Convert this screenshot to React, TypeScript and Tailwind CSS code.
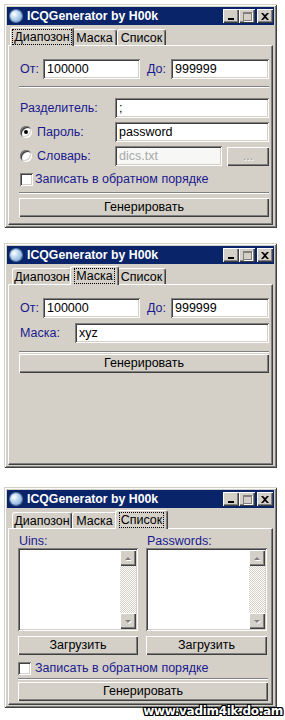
import type { ReactNode } from "react";

const sunken =
  "shadow-[inset_1px_1px_#808080,inset_-1px_-1px_#ffffff,inset_2px_2px_#404040,inset_-2px_-2px_#d4d0c8]";
const raised =
  "shadow-[inset_1px_1px_#ffffff,inset_-1px_-1px_#404040,inset_-2px_-2px_#808080]";

const TABS = ["Диапозон", "Маска", "Список"];

function Globe() {
  /** round app icon in the caption. */
  return (
    <div className="h-[12px] w-[12px] rounded-full bg-[radial-gradient(circle_at_35%_35%,#ffffff_0%,#bcd6f0_40%,#6f9cc9_100%)] shadow-[0_0_0_1px_#5a7ea8]" />
  );
}

function CaptionButton({ kind }: { kind: "min" | "max" | "close" }) {
  return (
    <div className={`flex h-[14px] w-[16px] items-center justify-center bg-[#d4d0c8] ${raised}`}>
      {kind === "min" && <div className="mt-[5px] -ml-[1px] h-[2px] w-[6px] bg-black" />}
      {kind === "max" && (
        <div className="h-[9px] w-[9px] border border-t-2 border-[#808080] shadow-[1px_1px_#ffffff]" />
      )}
      {kind === "close" && (
        <svg width="8" height="7" viewBox="0 0 8 7">
          <path d="M0 0h2l2 2 2-2h2L5 3.5 8 7H6L4 5 2 7H0l3-3.5z" fill="#000" />
        </svg>
      )}
    </div>
  );
}

function TitleBar() {
  return (
    <div className="flex h-[18px] items-center bg-[#0a246a] pl-[3px] pr-[1px]">
      <Globe />
      <span className="ml-[5px] text-[12.3px] leading-none font-bold text-white">
        ICQGenerator by H00k
      </span>
      <div className="ml-auto flex items-center">
        <CaptionButton kind="min" />
        <CaptionButton kind="max" />
        <div className="ml-[2px]">
          <CaptionButton kind="close" />
        </div>
      </div>
    </div>
  );
}

function Tab({ label, active, width }: { label: string; active: boolean; width: number }) {
  if (active) {
    return (
      <div
        className="relative z-10 -mx-[2px] -mb-px flex h-[19px] items-start justify-center rounded-t-[3px] border-t border-r border-l border-white border-r-[#404040] bg-[#d4d0c8] pt-[1px] shadow-[inset_-1px_0_#808080]"
        style={{ width: width + 4 }}
      >
        <span className="border border-dotted border-black px-[1px] text-[12.5px] leading-[14px] text-black">
          {label}
        </span>
      </div>
    );
  }
  return (
    <div
      className="flex h-[16px] items-start justify-center rounded-t-[3px] border-t border-r border-l border-white border-r-[#404040] bg-[#d4d0c8] pt-[1px] shadow-[inset_-1px_0_#808080]"
      style={{ width }}
    >
      <span className="text-[12.5px] leading-[14px] text-black">{label}</span>
    </div>
  );
}

function Window({ active, panelHeight, children }: { active: number; panelHeight: number; children: ReactNode }) {
  /** classic win2000 window with tab control. */
  const widths = [60, 45, 49];
  return (
    <div className="w-[273px] bg-[#d4d0c8] p-[3px] shadow-[inset_1px_1px_#d4d0c8,inset_-1px_-1px_#404040,inset_2px_2px_#ffffff,inset_-2px_-2px_#808080]">
      <TitleBar />
      <div className="px-[1px] pt-[2px]">
        <div className="flex h-[18px] items-end pl-[4px]">
          {TABS.map((t, i) => (
            <Tab key={t} label={t} active={i === active} width={widths[i]} />
          ))}
        </div>
        <div
          className="border border-white border-r-[#404040] border-b-[#404040] shadow-[inset_-1px_-1px_#808080]"
          style={{ height: panelHeight }}
        >
          {children}
        </div>
      </div>
    </div>
  );
}

function Label({ children, className = "" }: { children: ReactNode; className?: string }) {
  return <span className={`text-[12.5px] leading-none text-[#1a1a8e] ${className}`}>{children}</span>;
}

function Input({ value, width, disabled }: { value: string; width: number; disabled?: boolean }) {
  return (
    <div
      className={`flex h-[20px] shrink-0 items-center pl-[4px] text-[12.5px] ${sunken} ${
        disabled ? "bg-[#f7f7f5] text-[#a8a8a8]" : "bg-white text-black"
      }`}
      style={{ width }}
    >
      {value}
    </div>
  );
}

function Button({ children, width, disabled }: { children: ReactNode; width: number; disabled?: boolean }) {
  return (
    <div
      className={`flex h-[19px] shrink-0 items-center justify-center bg-[#d4d0c8] text-[12.5px] ${raised} ${
        disabled ? "text-[#a0a0a0] [text-shadow:1px_1px_#ffffff]" : "text-black"
      }`}
      style={{ width }}
    >
      {children}
    </div>
  );
}

function Separator({ width }: { width: number }) {
  return <div className="h-[2px] border-t border-b border-t-[#808080] border-b-white" style={{ width }} />;
}

function Radio({ checked }: { checked?: boolean }) {
  return (
    <div className={`flex h-[12px] w-[12px] shrink-0 items-center justify-center rounded-full bg-white ${sunken}`}>
      {checked && <div className="h-[4px] w-[4px] rounded-full bg-black" />}
    </div>
  );
}

function Checkbox() {
  return <div className={`h-[13px] w-[13px] shrink-0 bg-white ${sunken}`} />;
}

function RangeRow() {
  return (
    <div className="flex items-center">
      <Label className="ml-[1px] w-[23px]">От:</Label>
      <Input value="100000" width={97} />
      <Label className="ml-[7px] w-[24px]">До:</Label>
      <Input value="999999" width={98} />
    </div>
  );
}

function ScrollArrow({ up }: { up?: boolean }) {
  return (
    <div className={`flex h-[16px] w-[16px] items-center justify-center bg-[#d4d0c8] ${raised}`}>
      <svg width="8" height="5" viewBox="0 0 8 5" className="overflow-visible">
        <path d={up ? "M1 4h6L4 1z" : "M1 1h6L4 4z"} fill="#ffffff" transform="translate(1 1)" />
        <path d={up ? "M1 4h6L4 1z" : "M1 1h6L4 4z"} fill="#808080" />
      </svg>
    </div>
  );
}

function ListBox({ width }: { width: number }) {
  return (
    <div className={`flex h-[83px] bg-white p-[2px] ${sunken}`} style={{ width }}>
      <div className="flex-1" />
      <div className="flex w-[16px] flex-col bg-[repeating-conic-gradient(#d4d0c8_0_25%,#ffffff_0_50%)] bg-[length:2px_2px]">
        <ScrollArrow up />
        <div className="flex-1" />
        <ScrollArrow />
      </div>
    </div>
  );
}

function RangePanel() {
  return (
    <div className="flex flex-col pt-[13px] pl-[10px]">
      <RangeRow />
      <div className="mt-[7px]">
        <Separator width={250} />
      </div>
      <div className="mt-[10px] flex items-center">
        <Label className="ml-[1px] w-[95px]">Разделитель:</Label>
        <Input value=";" width={154} />
      </div>
      <div className="mt-[4px] flex items-center">
        <div className="ml-[1px] flex w-[95px] items-center">
          <Radio checked />
          <Label className="ml-[5px]">Пароль:</Label>
        </div>
        <Input value="password" width={154} />
      </div>
      <div className="mt-[4px] flex items-center">
        <div className="ml-[1px] flex w-[95px] items-center">
          <Radio />
          <Label className="ml-[5px]">Словарь:</Label>
        </div>
        <Input value="dics.txt" width={107} disabled />
        <div className="ml-[5px]">
          <Button width={42} disabled>
            ...
          </Button>
        </div>
      </div>
      <div className="mt-[5px] flex h-[16px] items-center">
        <div className="ml-[1px]">
          <Checkbox />
        </div>
        <Label className="ml-[2px]">Записать в обратном порядке</Label>
      </div>
      <div className="mt-[5px]">
        <Separator width={250} />
      </div>
      <div className="mt-[4px]">
        <Button width={250}>Генерировать</Button>
      </div>
    </div>
  );
}

function MaskPanel() {
  return (
    <div className="flex flex-col pt-[13px] pl-[10px]">
      <RangeRow />
      <div className="mt-[5px] flex items-center">
        <Label className="ml-[1px] w-[55px]">Маска:</Label>
        <Input value="xyz" width={194} />
      </div>
      <div className="mt-[8px]">
        <Separator width={250} />
      </div>
      <div className="mt-[1px]">
        <Button width={250}>Генерировать</Button>
      </div>
    </div>
  );
}

function ListPanel() {
  return (
    <div className="flex flex-col pt-[6px] pl-[9px]">
      <div className="flex">
        <div className="flex w-[128px] flex-col">
          <Label className="ml-[1px] h-[13px]">Uins:</Label>
          <ListBox width={120} />
          <div className="mt-[5px]">
            <Button width={120}>Загрузить</Button>
          </div>
        </div>
        <div className="flex flex-col">
          <Label className="ml-[1px] h-[13px]">Passwords:</Label>
          <ListBox width={121} />
          <div className="mt-[5px]">
            <Button width={121}>Загрузить</Button>
          </div>
        </div>
      </div>
      <div className="mt-[7px] flex h-[13px] items-center">
        <Checkbox />
        <Label className="ml-[4px]">Записать в обратном порядке</Label>
      </div>
      <div className="mt-[3px]">
        <Separator width={250} />
      </div>
      <div className="mt-[2px]">
        <Button width={250}>Генерировать</Button>
      </div>
    </div>
  );
}

export default function App() {
  return (
    <div className="relative h-[720px] w-[285px] overflow-hidden bg-white pt-[4px] pl-[4px] font-['Liberation_Sans',Arial,sans-serif]">
      <Window active={0} panelHeight={180}>
        <RangePanel />
      </Window>
      <div className="mt-[15px]">
        <Window active={1} panelHeight={181}>
          <MaskPanel />
        </Window>
      </div>
      <div className="mt-[19px]">
        <Window active={2} panelHeight={177}>
          <ListPanel />
        </Window>
      </div>
      <div className="absolute right-[2px] bottom-[1px] font-['DejaVu_Sans',sans-serif] text-[12px] leading-[15px] font-bold tracking-[-0.3px] text-white [text-shadow:1px_0_#000,-1px_0_#000,0_1px_#000,0_-1px_#000,1px_1px_#000,-1px_-1px_#000,1px_-1px_#000,-1px_1px_#000]">
        www.vadim4ik.do.am
      </div>
    </div>
  );
}
